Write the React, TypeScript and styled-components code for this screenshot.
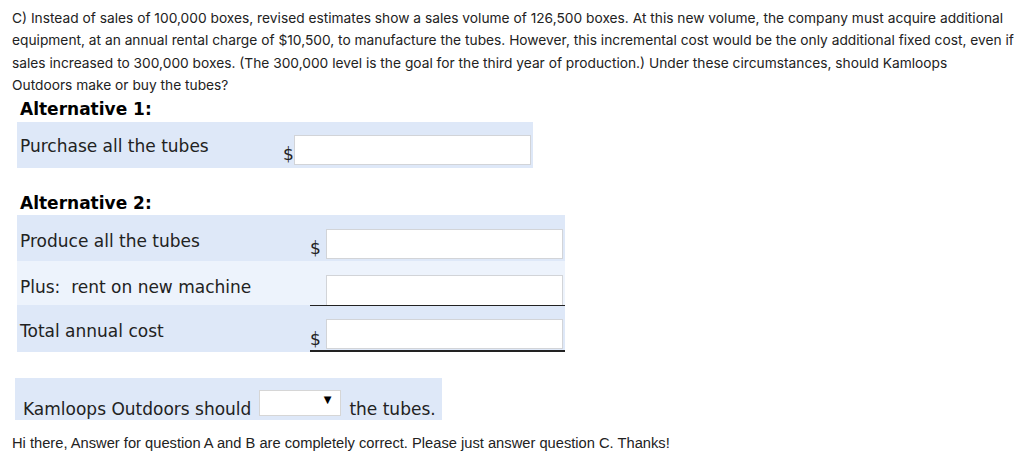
import styled, { createGlobalStyle } from "styled-components";

const GlobalStyle = createGlobalStyle`
  body {
    margin: 0;
    background: #ffffff;
  }
`;

const Page = styled.div`
  width: 1024px;
  height: 465px;
  overflow: hidden;
  padding: 7px 0 0 12px;
  box-sizing: border-box;
`;

const Question = styled.p`
  margin: 0;
  white-space: nowrap;
  font-family: "Inter", "Liberation Sans", sans-serif;
  font-size: 13.75px;
  line-height: 22.4px;
  color: #222222;
`;

const Heading = styled.div`
  margin: 2px 0 0 8px;
  font-family: "DejaVu Sans", Verdana, sans-serif;
  font-weight: bold;
  font-size: 17px;
  line-height: 20px;
  color: #000;
`;

const Card = styled.div`
  margin: 3px 0 0 5px;
  width: 516px;
  display: grid;
  grid-template-columns: 263px 11px 237px;
  padding: 13px 2px 3px 3px;
  box-sizing: border-box;
  background: #dee8f8;
  font-family: "DejaVu Sans", Verdana, sans-serif;
  font-size: 17px;
  line-height: 20px;
  color: #222;
`;

const Spacer = styled.div`
  height: 23px;
`;

const Table = styled.div`
  margin: 2px 0 0 5px;
  width: 548px;
  font-family: "DejaVu Sans", Verdana, sans-serif;
  font-size: 17px;
  line-height: 20px;
  color: #222;
`;

const Row = styled.div<{ $light?: boolean; $tall?: number }>`
  display: grid;
  grid-template-columns: 290px 16px 237px;
  padding: 14px 2px 0 3px;
  height: ${(p) => p.$tall ?? 46}px;
  box-sizing: border-box;
  background: ${(p) => (p.$light ? "#edf3fc" : "#dee8f8")};
`;

const Label = styled.div<{ $drop?: number }>`
  align-self: start;
  padding-top: ${(p) => p.$drop ?? 2}px;
  white-space: nowrap;
`;

const Dollar = styled.div`
  align-self: end;
  padding-bottom: 1px;
  text-align: left;
`;

const AmountCell = styled.div<{ $rule?: number }>`
  grid-column: 2 / 4;
  display: grid;
  grid-template-columns: 16px 237px;
  margin-right: -2px;
  padding-right: 2px;
  padding-bottom: ${(p) => (p.$rule ? 0 : 3)}px;
  border-bottom: ${(p) => (p.$rule ? `${p.$rule}px solid #222` : "none")};
`;

const Field = styled.div<{ $open?: boolean }>`
  height: 30px;
  box-sizing: border-box;
  background: #fff;
  border: 1px solid #d2d4d8;
  border-bottom: ${(p) => (p.$open ? "none" : "1px solid #d2d4d8")};
`;

const Answer = styled.div`
  margin: 26px 0 0 3px;
  width: 427px;
  height: 42px;
  box-sizing: border-box;
  padding: 0 0 1px 8px;
  background: #dee8f8;
  display: flex;
  align-items: flex-end;
  gap: 8px;
  font-family: "DejaVu Sans", Verdana, sans-serif;
  font-size: 17px;
  line-height: 20px;
  color: #222;
  white-space: nowrap;
`;

const Select = styled.div`
  width: 82px;
  height: 26px;
  box-sizing: border-box;
  margin-bottom: 3px;
  background: #fff;
  border: 1px solid #d6d6d6;
  display: flex;
  justify-content: flex-end;
  padding: 3px 9px 0 0;
  font-size: 10px;
  line-height: 12px;
  color: #000;
`;

const Note = styled.p`
  margin: 14px 0 0 0;
  font-family: "Liberation Sans Narrow", "Liberation Sans", Arial, sans-serif;
  font-size: 14.7px;
  line-height: 18px;
  color: #222;
`;

export default function App() {
  return (
    <>
      <GlobalStyle />
      <Page>
        <Question>
          C) Instead of sales of 100,000 boxes, revised estimates show a sales
          volume of 126,500 boxes. At this new volume, the company must acquire
          additional
          <br />
          equipment, at an annual rental charge of $10,500, to manufacture the
          tubes. However, this incremental cost would be the only additional
          fixed cost, even if
          <br />
          sales increased to 300,000 boxes. (The 300,000 level is the goal for
          the third year of production.) Under these circumstances, should
          Kamloops
          <br />
          Outdoors make or buy the tubes?
        </Question>
        <Heading>Alternative 1:</Heading>
        <Card>
          <Label $drop={1}>Purchase all the tubes</Label>
          <Dollar>$</Dollar>
          <Field />
        </Card>
        <Spacer />
        <Heading>Alternative 2:</Heading>
        <Table>
          <Row>
            <Label>Produce all the tubes</Label>
            <AmountCell>
              <Dollar>$</Dollar>
              <Field />
            </AmountCell>
          </Row>
          <Row $light $tall={44}>
            <Label>Plus:&nbsp; rent on new machine</Label>
            <AmountCell $rule={1}>
              <span />
              <Field $open />
            </AmountCell>
          </Row>
          <Row $tall={47}>
            <Label>Total annual cost</Label>
            <AmountCell $rule={2}>
              <Dollar>$</Dollar>
              <Field />
            </AmountCell>
          </Row>
        </Table>
        <Answer>
          <span>Kamloops Outdoors should</span>
          <Select>▼</Select>
          <span>the tubes.</span>
        </Answer>
        <Note>
          Hi there, Answer for question A and B are completely correct. Please
          just answer question C. Thanks!
        </Note>
      </Page>
    </>
  );
}
